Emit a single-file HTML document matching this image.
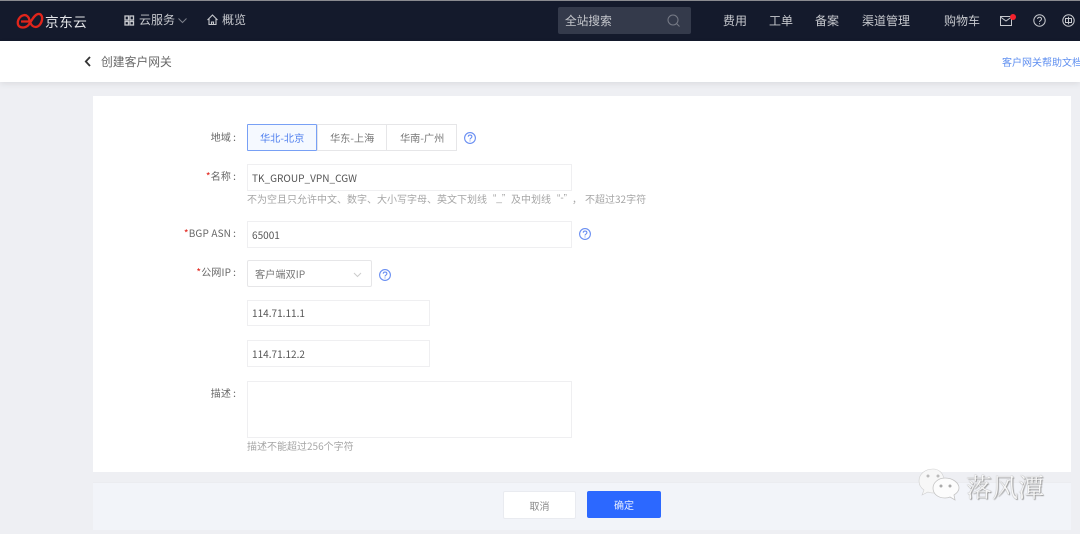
<!DOCTYPE html>
<html lang="zh"><head><meta charset="utf-8"><style>
html,body{margin:0;padding:0;background:#eeeff3}
body{width:1080px;height:534px;overflow:hidden;position:relative;font-family:"Noto Sans CJK SC","Liberation Sans",sans-serif;font-size:10.2px;color:#555}
#w{position:absolute;left:0;top:0;width:1080px;height:534px;overflow:hidden;background:#eeeff3;filter:blur(.35px)}
.a{position:absolute;white-space:nowrap;line-height:16px}
.box{position:absolute;box-sizing:border-box;background:#fff;border:1px solid #efeff1}
.nav{color:#c6c8cd;font-size:12px}
.lab{text-align:right;right:844px;color:#666;font-size:10px;letter-spacing:.15px}
.lab i{color:#e2231a;font-style:normal}
.lab b{font-weight:normal;margin-left:2px}
.val{color:#555;font-size:10.050px}
.hint{color:#a6a6a6;font-size:10px}
.q{font-family:"Liberation Sans",sans-serif}
svg{position:absolute;overflow:visible}
</style></head><body><div id="w">
<div style="position:absolute;left:0;top:0;width:1080px;height:1px;background:#8a8b90"></div>
<div style="position:absolute;left:0;top:1px;width:1080px;height:40px;background:#141a2c"></div>
<div style="position:absolute;left:0;top:41px;width:1080px;height:41px;background:#fff;box-shadow:0 2px 6px rgba(0,0,0,.08)"></div>
<div style="position:absolute;left:93px;top:96px;width:978px;height:376px;background:#fff"></div>
<div style="position:absolute;left:93px;top:482px;width:978px;height:48px;background:#f2f4f9;border-top:1px solid #ebecf0;box-sizing:border-box"></div>

<svg style="left:16px;top:12px" width="28" height="18" viewBox="0 0 28 18" fill="none" stroke="#e1251b" stroke-width="2.300"><path d="M5 9.500H13.500C13.500 5 10.500 2.500 7.500 3.200C3.500 4 1 9 2 12.500C3.200 16 8.500 16.500 12 13.500C15 10.500 17.500 3 22 2C25 1.500 26.800 4.500 26 8C25.200 12 22.500 15 19.500 15C16.500 15 15 12.500 14 10"/></svg>
<div class="a" style="left:45px;top:13px;color:#e4e5e8;font-size:13.700px;letter-spacing:.4px">京东云</div>

<svg style="left:124px;top:15px" width="11" height="11" fill="none" stroke="#c6c8cd" stroke-width="1.300"><rect x="1" y="1" width="3.500" height="4"/><rect x="6" y="1" width="3.500" height="4"/><rect x="1" y="6.500" width="3.500" height="3.500"/><rect x="6" y="6.500" width="3.500" height="3.500"/></svg>
<div class="a nav" style="left:139px;top:12px">云服务</div>
<svg style="left:178px;top:18px" width="9" height="6" fill="none" stroke="#7d818c"><path d="M.5 .5L4.500 4.500L8.500 .5"/></svg>
<svg style="left:207px;top:14px" width="12" height="12" fill="none" stroke="#c6c8cd" stroke-width="1.100"><path d="M.5 6L5.500 1L10.500 6M2 5V10.500H9V5M4.500 10.500V8H6.500V10.500"/></svg>
<div class="a nav" style="left:222px;top:12px">概览</div>

<div style="position:absolute;left:558px;top:7px;width:133px;height:27px;background:#343a4b;border-radius:2px"></div>
<div class="a nav" style="left:565px;top:13px;font-size:11.700px">全站搜索</div>
<svg style="left:667px;top:14px" width="14" height="14" fill="none" stroke="#777b87"><circle cx="6" cy="6" r="5"/><path d="M9.500 9.500L12.500 12.500"/></svg>

<div class="a nav" style="left:723px;top:13px">费用</div>
<div class="a nav" style="left:769px;top:13px">工单</div>
<div class="a nav" style="left:815px;top:13px">备案</div>
<div class="a nav" style="left:862px;top:13px">渠道管理</div>
<div class="a nav" style="left:944px;top:13px">购物车</div>

<svg style="left:1000px;top:14px" width="18" height="14" fill="none" stroke="#c6c8cd"><path d="M.5 2.500H11.500V11.500H.5ZM.5 3L6 7L11.500 3"/><circle cx="13" cy="3" r="3" fill="#f5222d" stroke="none"/></svg>
<svg style="left:1033px;top:14px" width="13" height="13" fill="none" stroke="#c6c8cd"><circle cx="6.500" cy="6.500" r="5.700"/><path d="M4.600 5C4.700 2.600 8.500 2.700 8.500 5C8.500 6.500 6.500 6.500 6.500 8M6.500 9.200V10.200"/></svg>
<svg style="left:1062px;top:14px" width="13" height="13" fill="none" stroke="#c6c8cd"><circle cx="6.500" cy="6.500" r="5.700"/><rect x="3.500" y="4.500" width="6" height="4"/><path d="M6.500 2.800V10.200"/></svg>

<svg style="left:84px;top:56px" width="8" height="11" fill="none" stroke="#333" stroke-width="1.800"><path d="M6 1L1.800 5.500L6 10"/></svg>
<div class="a" style="left:101px;top:54px;font-size:11.800px;color:#666">创建客户网关</div>
<div class="a" style="left:1002px;top:54px;font-size:10px;color:#5f8ff0">客户网关帮助文档</div>

<div class="a lab" style="top:129px">地域<b>:</b></div>
<div class="box" style="left:317px;top:124px;width:70px;height:27px;border-color:#e6e6e8"></div>
<div class="box" style="left:386px;top:124px;width:71px;height:27px;border-color:#e6e6e8"></div>
<div class="box" style="left:247px;top:124px;width:70px;height:27px;background:#f5f9ff;border-color:#78a0f5;border-radius:1px"></div>
<div class="a" style="left:260px;top:130px;color:#4f7fee">华北-北京</div>
<div class="a" style="left:330px;top:130px;color:#777">华东-上海</div>
<div class="a" style="left:400px;top:130px;color:#777">华南-广州</div>
<svg style="left:464px;top:132px" width="12" height="12" fill="none" stroke="#6a8ff2" stroke-width="1.100"><circle cx="6" cy="6" r="5.400"/><path d="M4.200 4.700C4.300 2.500 7.900 2.600 7.900 4.700C7.900 6.100 6 6 6 7.500M6 8.500V9.400"/></svg>

<div class="a lab" style="top:168px"><i>*</i>名称<b>:</b></div>
<div class="box" style="left:247px;top:164px;width:325px;height:27px"></div>
<div class="a val" style="left:252px;top:170px">TK_GROUP_VPN_CGW</div>
<div class="a hint" style="left:247px;top:191px">不为空且只允许中文、数字、大小写字母、英文下划线</div>
<div class="a hint q" style="left:493px;top:191px">“_”</div>
<div class="a hint" style="left:511px;top:191px">及中划线</div>
<div class="a hint q" style="left:557px;top:191px">“-”</div>
<div class="a hint" style="left:572px;top:191px">，</div>
<div class="a hint" style="left:585px;top:191px">不超过32字符</div>

<div class="a lab" style="top:225px"><i>*</i>BGP ASN<b>:</b></div>
<div class="box" style="left:247px;top:221px;width:325px;height:27px"></div>
<div class="a val" style="left:252px;top:227px">65001</div>
<svg style="left:579px;top:228px" width="12" height="12" fill="none" stroke="#6a8ff2" stroke-width="1.100"><circle cx="6" cy="6" r="5.400"/><path d="M4.200 4.700C4.300 2.500 7.900 2.600 7.900 4.700C7.900 6.100 6 6 6 7.500M6 8.500V9.400"/></svg>

<div class="a lab" style="top:264px"><i>*</i>公网IP<b>:</b></div>
<div class="box" style="left:247px;top:260px;width:125px;height:27px;border-color:#e6e6e8;border-radius:2px"></div>
<div class="a" style="left:255px;top:266px;color:#777">客户端双IP</div>
<svg style="left:353px;top:272px" width="9" height="6" fill="none" stroke="#ccc"><path d="M1 1L4.500 4.500L8 1"/></svg>
<svg style="left:379px;top:269px" width="12" height="12" fill="none" stroke="#6a8ff2" stroke-width="1.100"><circle cx="6" cy="6" r="5.400"/><path d="M4.200 4.700C4.300 2.500 7.900 2.600 7.900 4.700C7.900 6.100 6 6 6 7.500M6 8.500V9.400"/></svg>

<div class="box" style="left:247px;top:300px;width:183px;height:26px"></div>
<div class="a val" style="left:252px;top:305px">114.71.11.1</div>
<div class="box" style="left:247px;top:340px;width:183px;height:27px"></div>
<div class="a val" style="left:252px;top:346px">114.71.12.2</div>

<div class="a lab" style="top:385px">描述<b>:</b></div>
<div class="box" style="left:247px;top:381px;width:325px;height:57px"></div>
<div class="a hint" style="left:247px;top:438px">描述不能超过256个字符</div>

<div style="position:absolute;left:503px;top:491px;width:73px;height:28px;box-sizing:border-box;background:#fff;border:1px solid #e9ebf0;border-radius:2px;text-align:center;line-height:27px;color:#888;font-size:10px">取消</div>
<div style="position:absolute;left:587px;top:491px;width:74px;height:27px;background:#2c68ff;border-radius:2px;text-align:center;line-height:27px;color:#e6edff;font-size:10px">确定</div>

<svg style="left:918px;top:467px" width="44" height="36" viewBox="0 0 44 36"><path d="M15 2C7 2 1 7 1 14C1 18 3 21 6 23L4 28L10 25C12 26 14 26 16 26L26 12C25 6 21 2 15 2Z" fill="#f7f7f7" stroke="#d0d0d0" stroke-width=".6"/><path d="M27 11C20 11 15 16 15 21C15 27 20 31 27 31C29 31 30 31 32 30L37 33L36 28C39 26 41 24 41 21C41 16 35 11 27 11Z" fill="#fcfcfc" stroke="#c4c4c4" stroke-width=".8"/><circle cx="10" cy="9" r="1.500" fill="#bbb"/><circle cx="20" cy="9" r="1.500" fill="#bbb"/><circle cx="23" cy="19" r="1.500" fill="#aaa"/><circle cx="32" cy="19" r="1.500" fill="#aaa"/></svg>
<div class="a" style="left:966px;top:472px;font-size:26px;line-height:30px;color:#f7f7f7;text-shadow:1px 1px 1px #999,0 0 1px #888;font-family:'Noto Serif CJK SC','Liberation Sans',sans-serif;font-weight:300">落风潭</div>
</div></body></html>
